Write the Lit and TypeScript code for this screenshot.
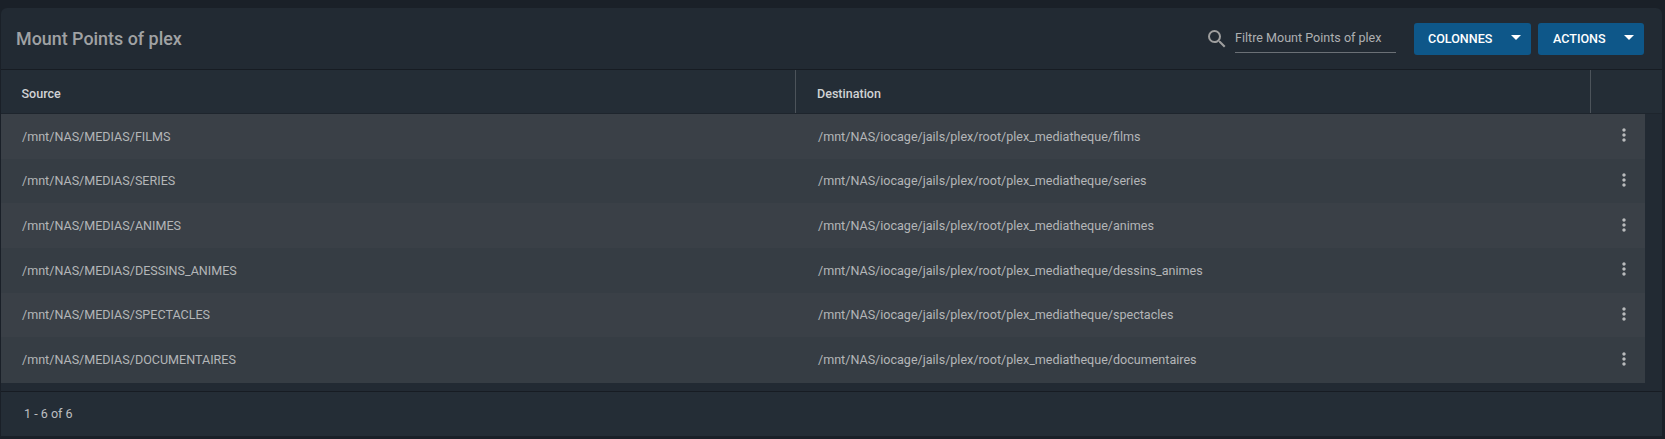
import { LitElement, html, css, svg } from "lit";
import { customElement } from "lit/decorators.js";

const rows = [
  ["/mnt/NAS/MEDIAS/FILMS", "/mnt/NAS/iocage/jails/plex/root/plex_mediatheque/films"],
  ["/mnt/NAS/MEDIAS/SERIES", "/mnt/NAS/iocage/jails/plex/root/plex_mediatheque/series"],
  ["/mnt/NAS/MEDIAS/ANIMES", "/mnt/NAS/iocage/jails/plex/root/plex_mediatheque/animes"],
  ["/mnt/NAS/MEDIAS/DESSINS_ANIMES", "/mnt/NAS/iocage/jails/plex/root/plex_mediatheque/dessins_animes"],
  ["/mnt/NAS/MEDIAS/SPECTACLES", "/mnt/NAS/iocage/jails/plex/root/plex_mediatheque/spectacles"],
  ["/mnt/NAS/MEDIAS/DOCUMENTAIRES", "/mnt/NAS/iocage/jails/plex/root/plex_mediatheque/documentaires"],
];

const searchIcon = svg`<path d="M15.5 14h-.79l-.28-.27A6.47 6.47 0 0 0 16 9.5 6.5 6.5 0 1 0 9.5 16c1.61 0 3.09-.59 4.23-1.57l.27.28v.79l5 4.99L20.49 19l-4.99-5zm-6 0C7.01 14 5 11.99 5 9.5S7.01 5 9.5 5 14 7.01 14 9.5 11.99 14 9.5 14z"/>`;
const dotsIcon = svg`<path d="M12 8c1.1 0 2-.9 2-2s-.9-2-2-2-2 .9-2 2 .9 2 2 2zm0 2c-1.1 0-2 .9-2 2s.9 2 2 2 2-.9 2-2-.9-2-2-2zm0 6c-1.1 0-2 .9-2 2s.9 2 2 2 2-.9 2-2-.9-2-2-2z"/>`;

@customElement("app-root")
export class AppRoot extends LitElement {
  static styles = css`
    :host {
      display: block;
      height: 439px;
      box-sizing: border-box;
      padding: 8px 3px 3px 1px;
      background: #1a2028;
      font-family: Roboto, "Liberation Sans", sans-serif;
      overflow: hidden;
    }
    .card {
      height: 428px;
      display: flex;
      flex-direction: column;
      background: #222a33;
      border-radius: 6px 6px 0 0;
    }
    .toolbar {
      height: 62px;
      flex: none;
      box-sizing: border-box;
      display: flex;
      align-items: center;
      padding: 0 18px 0 15px;
      border-bottom: 1px solid #171c23;
    }
    .title {
      font-size: 17.9px;
      font-weight: 500;
      color: #a0a2a4;
      margin-right: auto;
    }
    .search {
      display: flex;
      align-items: center;
      gap: 6px;
      margin-right: 18px;
    }
    .search svg {
      width: 24px;
      height: 24px;
      fill: #9e9e9e;
    }
    .field {
      width: 161px;
      box-sizing: border-box;
      height: 29px;
      line-height: 26px;
      border-bottom: 1px solid #6b7076;
      font-size: 12.56px;
      color: #aeb0b2;
      white-space: nowrap;
      padding-top: 1px;
    }
    .btn {
      height: 32px;
      box-sizing: border-box;
      display: flex;
      align-items: center;
      background: #0e5789;
      color: #fff;
      border-radius: 3px;
      font-size: 12.56px;
      font-weight: 500;
    }
    .btn.cols {
      width: 117px;
      padding-left: 14px;
      margin-right: 7px;
    }
    .btn.acts {
      width: 106px;
      padding-left: 15px;
    }
    .caret {
      width: 0;
      height: 0;
      margin-left: auto;
      margin-right: 10px;
      margin-bottom: 2px;
      border-left: 5px solid transparent;
      border-right: 5px solid transparent;
      border-top: 5px solid #fff;
    }
    .head {
      height: 44px;
      flex: none;
      box-sizing: border-box;
      display: grid;
      grid-template-columns: 795px 795px 1fr;
      background: #242d36;
      border-bottom: 1px solid #1e252d;
      font-size: 12.56px;
      font-weight: 500;
      color: #d0d2d4;
    }
    .hcell {
      display: flex;
      align-items: center;
      border-right: 1px solid #4c535a;
      box-sizing: border-box;
      padding-top: 3px;
    }
    .hcell.src { padding-left: 20.5px; }
    .hcell.dst { padding-left: 21px; }
    .hcell.end { border-right: none; }
    .body {
      display: flex;
      flex-direction: column;
      width: 1644px;
    }
    .row {
      height: 44.67px;
      box-sizing: border-box;
      display: grid;
      grid-template-columns: 796px 1fr 48px;
      align-items: center;
      font-size: 12.56px;
      color: #b4b6b8;
    }
    .row:last-child {
      height: 45.67px;
      padding-bottom: 1px;
    }
    .row:nth-child(odd) { background: #3a4047; }
    .row:nth-child(even) { background: #363d44; }
    .cell { padding-left: 21px; }
    .menu {
      width: 20px;
      height: 20px;
      fill: #b9bbbd;
      margin-left: 17px;
      margin-bottom: 2px;
    }
    .footer {
      margin-top: 8px;
      height: 45px;
      box-sizing: border-box;
      border-top: 1px solid #171c23;
      background: #242d36;
      display: flex;
      align-items: center;
      padding-left: 23px;
      font-size: 12.56px;
      color: #bcbec0;
    }
  `;

  render() {
    return html`
      <div class="card">
        <div class="toolbar">
          <div class="title">Mount Points of plex</div>
          <div class="search">
            <svg viewBox="0 0 24 24">${searchIcon}</svg>
            <div class="field">Filtre Mount Points of plex</div>
          </div>
          <div class="btn cols">COLONNES<span class="caret"></span></div>
          <div class="btn acts">ACTIONS<span class="caret"></span></div>
        </div>
        <div class="head">
          <div class="hcell src">Source</div>
          <div class="hcell dst">Destination</div>
          <div class="hcell end"></div>
        </div>
        <div class="body">
          ${rows.map(
            ([a, b]) => html`<div class="row">
              <div class="cell">${a}</div>
              <div class="cell">${b}</div>
              <svg class="menu" viewBox="0 0 24 24">${dotsIcon}</svg>
            </div>`
          )}
        </div>
        <div class="footer">1 - 6 of 6</div>
      </div>
    `;
  }
}
